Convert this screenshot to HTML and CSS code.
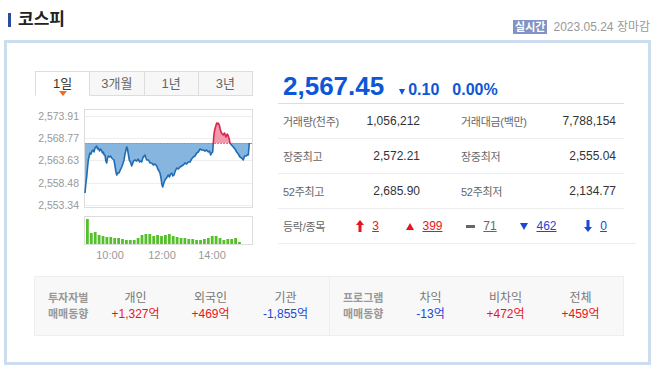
FILE: index.html
```html
<!DOCTYPE html>
<html lang="ko">
<head>
    <meta charset="UTF-8">
    <meta name="viewport" content="width=device-width, initial-scale=1.0">
    <title>코스피</title>
    <link rel="stylesheet" href="styles.css">
</head>
<body>
    <div class="head">
        <h2 class="title">코스피</h2>
        <div class="stamp">
            <span class="badge">실시간</span>
            <span class="date">2023.05.24 장마감</span>
        </div>
    </div>

    <div class="box">
        <div class="top">
            <div class="chart-col">
                <ul class="tabs">
                    <li class="on">1일</li>
                    <li>3개월</li>
                    <li>1년</li>
                    <li>3년</li>
                </ul>
                <svg class="chart" width="218" height="166" viewBox="0 0 218 166">
                    <defs>
                        <clipPath id="dn"><rect x="49" y="47" width="170" height="66"/></clipPath>
                        <clipPath id="upc"><rect x="49" y="13" width="170" height="34"/></clipPath>
                    </defs>
                    <!-- 가격 영역 -->
                    <rect x="49.5" y="13.5" width="168" height="98" fill="#fff" stroke="#ddd"/>
                    <g stroke="#eee" stroke-width="1">
                        <line x1="50" y1="20.5" x2="217" y2="20.5"/>
                        <line x1="50" y1="42.5" x2="217" y2="42.5"/>
                        <line x1="50" y1="64.5" x2="217" y2="64.5"/>
                        <line x1="50" y1="87.5" x2="217" y2="87.5"/>
                        <line x1="50" y1="109.5" x2="217" y2="109.5"/>
                    </g>
                    <g class="ylab" text-anchor="end">
                        <text x="44" y="24">2,573.91</text>
                        <text x="44" y="46">2,568.77</text>
                        <text x="44" y="68">2,563.63</text>
                        <text x="44" y="91">2,558.48</text>
                        <text x="44" y="113">2,553.34</text>
                    </g>
                    <g id="line-shape">
                        <polygon clip-path="url(#dn)" fill="#86b6df" points="50,47 50,97 50.8,88 51.7,81 52.5,72 53.3,64 54.2,60 55,57 56,58 57,55 58,54 59,56 60,52 61.7,50 62.5,53 63.3,52 64.5,55 65.5,53 66.7,55 67.5,57 68.3,56 69.2,59 70,59 70.8,65 71.7,67 72.5,62 73.4,60 74.3,61 75.5,60 76.7,62 77.8,63 79,64 80,70 80.8,75 81.7,79 82.8,77 84,77 85.3,74 86.7,71 87.8,68 89,64 90,58 91,54 91.7,51 92.3,52 93.3,58 94.3,64 95.5,66 96.7,70 97.5,68 98.5,65 100,64 101.7,65 103.3,63 104.5,66 105.6,65 106.7,66 107.8,62 109,60 110,59 110.8,62 111.7,64 113.5,64 115,67 116.7,67 118.3,69 120,68 121.7,70 122.8,73 124,75 125,77 126,82 126.8,88 127.7,91 128.8,87 130,84 131.5,82 133.3,79 134.5,81 135.6,78 136.7,77 137.8,80 139,79 140.3,75 141.7,72 143.3,73 145,71 146.6,70 148.3,69 150,67 151.6,68 153.3,66 155,66 156.6,63 158.3,61 160,60 161.7,57 163.3,56 165,53 166.6,54 168.3,54 170,55 171.5,54 173.3,56 174.5,55 175.7,59 176.7,57 177.7,56 178.3,47 178.8,40 179.3,36 180.5,31 181.7,27 182.5,28 183.3,27 184.3,29 185.2,33 186,36 187.2,38 188.3,39 189.5,37 191,41 192.2,38 193.3,40 194.2,43 195,47 196.5,49 198.3,51 200,53 201.7,56 203.3,58 205,61 206.6,62 208.3,64 209.5,60 211,60 212.3,59 213.3,59 214.3,47"/>
                        <polygon clip-path="url(#upc)" fill="#f09aab" points="50,47 50,97 50.8,88 51.7,81 52.5,72 53.3,64 54.2,60 55,57 56,58 57,55 58,54 59,56 60,52 61.7,50 62.5,53 63.3,52 64.5,55 65.5,53 66.7,55 67.5,57 68.3,56 69.2,59 70,59 70.8,65 71.7,67 72.5,62 73.4,60 74.3,61 75.5,60 76.7,62 77.8,63 79,64 80,70 80.8,75 81.7,79 82.8,77 84,77 85.3,74 86.7,71 87.8,68 89,64 90,58 91,54 91.7,51 92.3,52 93.3,58 94.3,64 95.5,66 96.7,70 97.5,68 98.5,65 100,64 101.7,65 103.3,63 104.5,66 105.6,65 106.7,66 107.8,62 109,60 110,59 110.8,62 111.7,64 113.5,64 115,67 116.7,67 118.3,69 120,68 121.7,70 122.8,73 124,75 125,77 126,82 126.8,88 127.7,91 128.8,87 130,84 131.5,82 133.3,79 134.5,81 135.6,78 136.7,77 137.8,80 139,79 140.3,75 141.7,72 143.3,73 145,71 146.6,70 148.3,69 150,67 151.6,68 153.3,66 155,66 156.6,63 158.3,61 160,60 161.7,57 163.3,56 165,53 166.6,54 168.3,54 170,55 171.5,54 173.3,56 174.5,55 175.7,59 176.7,57 177.7,56 178.3,47 178.8,40 179.3,36 180.5,31 181.7,27 182.5,28 183.3,27 184.3,29 185.2,33 186,36 187.2,38 188.3,39 189.5,37 191,41 192.2,38 193.3,40 194.2,43 195,47 196.5,49 198.3,51 200,53 201.7,56 203.3,58 205,61 206.6,62 208.3,64 209.5,60 211,60 212.3,59 213.3,59 214.3,47"/>
                    </g>
                    <line x1="50" y1="47.5" x2="217" y2="47.5" stroke="#999" stroke-dasharray="2 1"/>
                    <polyline clip-path="url(#dn)" fill="none" stroke="#1f6db3" stroke-width="1.6" stroke-linejoin="round" points="50,97 50.8,88 51.7,81 52.5,72 53.3,64 54.2,60 55,57 56,58 57,55 58,54 59,56 60,52 61.7,50 62.5,53 63.3,52 64.5,55 65.5,53 66.7,55 67.5,57 68.3,56 69.2,59 70,59 70.8,65 71.7,67 72.5,62 73.4,60 74.3,61 75.5,60 76.7,62 77.8,63 79,64 80,70 80.8,75 81.7,79 82.8,77 84,77 85.3,74 86.7,71 87.8,68 89,64 90,58 91,54 91.7,51 92.3,52 93.3,58 94.3,64 95.5,66 96.7,70 97.5,68 98.5,65 100,64 101.7,65 103.3,63 104.5,66 105.6,65 106.7,66 107.8,62 109,60 110,59 110.8,62 111.7,64 113.5,64 115,67 116.7,67 118.3,69 120,68 121.7,70 122.8,73 124,75 125,77 126,82 126.8,88 127.7,91 128.8,87 130,84 131.5,82 133.3,79 134.5,81 135.6,78 136.7,77 137.8,80 139,79 140.3,75 141.7,72 143.3,73 145,71 146.6,70 148.3,69 150,67 151.6,68 153.3,66 155,66 156.6,63 158.3,61 160,60 161.7,57 163.3,56 165,53 166.6,54 168.3,54 170,55 171.5,54 173.3,56 174.5,55 175.7,59 176.7,57 177.7,56 178.3,47 178.8,40 179.3,36 180.5,31 181.7,27 182.5,28 183.3,27 184.3,29 185.2,33 186,36 187.2,38 188.3,39 189.5,37 191,41 192.2,38 193.3,40 194.2,43 195,47 196.5,49 198.3,51 200,53 201.7,56 203.3,58 205,61 206.6,62 208.3,64 209.5,60 211,60 212.3,59 213.3,59 214.3,47"/>
                    <polyline clip-path="url(#upc)" fill="none" stroke="#d8274e" stroke-width="1.6" stroke-linejoin="round" points="177.7,56 178.3,47 178.8,40 179.3,36 180.5,31 181.7,27 182.5,28 183.3,27 184.3,29 185.2,33 186,36 187.2,38 188.3,39 189.5,37 191,41 192.2,38 193.3,40 194.2,43 195,47 196.5,49"/>

                    <!-- 거래량 -->
                    <rect x="49.5" y="120.5" width="168" height="28" fill="#fff" stroke="#ddd"/>
                    <g fill="#54c02a">
                        <rect x="51" y="123" width="2.8" height="25"/>
                        <rect x="54.9" y="137" width="2.8" height="11"/>
                        <rect x="58.8" y="136" width="2.8" height="12"/>
                        <rect x="62.7" y="139" width="2.8" height="9"/>
                        <rect x="66.6" y="140" width="2.8" height="8"/>
                        <rect x="70.5" y="141" width="2.8" height="7"/>
                        <rect x="74.4" y="141" width="2.8" height="7"/>
                        <rect x="78.3" y="142" width="2.8" height="6"/>
                        <rect x="82.2" y="142" width="2.8" height="6"/>
                        <rect x="86.1" y="143" width="2.8" height="5"/>
                        <rect x="90" y="144" width="2.8" height="4"/>
                        <rect x="93.9" y="144" width="2.8" height="4"/>
                        <rect x="97.8" y="144" width="2.8" height="4"/>
                        <rect x="101.7" y="142" width="2.8" height="6"/>
                        <rect x="105.6" y="139" width="2.8" height="9"/>
                        <rect x="109.5" y="138" width="2.8" height="10"/>
                        <rect x="113.4" y="138" width="2.8" height="10"/>
                        <rect x="117.3" y="140" width="2.8" height="8"/>
                        <rect x="121.2" y="139" width="2.8" height="9"/>
                        <rect x="125.1" y="140" width="2.8" height="8"/>
                        <rect x="129" y="139" width="2.8" height="9"/>
                        <rect x="132.9" y="138" width="2.8" height="10"/>
                        <rect x="136.8" y="140" width="2.8" height="8"/>
                        <rect x="140.7" y="141" width="2.8" height="7"/>
                        <rect x="144.6" y="142" width="2.8" height="6"/>
                        <rect x="148.5" y="142" width="2.8" height="6"/>
                        <rect x="152.4" y="143" width="2.8" height="5"/>
                        <rect x="156.3" y="143" width="2.8" height="5"/>
                        <rect x="160.2" y="144" width="2.8" height="4"/>
                        <rect x="164.1" y="144" width="2.8" height="4"/>
                        <rect x="168" y="143" width="2.8" height="5"/>
                        <rect x="171.9" y="142" width="2.8" height="6"/>
                        <rect x="175.8" y="140" width="2.8" height="8"/>
                        <rect x="179.7" y="140" width="2.8" height="8"/>
                        <rect x="183.6" y="142" width="2.8" height="6"/>
                        <rect x="187.5" y="144" width="2.8" height="4"/>
                        <rect x="191.4" y="143" width="2.8" height="5"/>
                        <rect x="195.3" y="143" width="2.8" height="5"/>
                        <rect x="199.2" y="142" width="2.8" height="6"/>
                        <rect x="203.1" y="146" width="2.8" height="2"/>
                    </g>
                    <g class="xlab" text-anchor="middle">
                        <text x="75" y="163">10:00</text>
                        <text x="127" y="163">12:00</text>
                        <text x="177" y="163">14:00</text>
                    </g>
                </svg>
            </div>

            <div class="info">
                <div class="price-row">
                    <strong class="price">2,567.45</strong>
                    <span class="chg"><svg class="tri" width="6" height="6" viewBox="0 0 6 6"><polygon points="0,0 6,0 3,6" fill="currentColor"/></svg>0.10</span>
                    <span class="rate">0.00%</span>
                </div>
                <div class="row">
                    <span class="lbl">거래량(천주)</span>
                    <span class="val">1,056,212</span>
                    <span class="lbl lbl2">거래대금(백만)</span>
                    <span class="val">7,788,154</span>
                </div>
                <div class="row">
                    <span class="lbl">장중최고</span>
                    <span class="val">2,572.21</span>
                    <span class="lbl lbl2">장중최저</span>
                    <span class="val">2,555.04</span>
                </div>
                <div class="row">
                    <span class="lbl">52주최고</span>
                    <span class="val">2,685.90</span>
                    <span class="lbl lbl2">52주최저</span>
                    <span class="val">2,134.77</span>
                </div>
                <div class="row updown">
                    <span class="lbl">등락/종목</span>
                    <a class="cnt red"><svg width="8" height="12" viewBox="0 0 8 12"><polygon points="4,0 8,5 5.5,5 5.5,12 2.5,12 2.5,5 0,5" fill="currentColor"/></svg><u>3</u></a>
                    <a class="cnt red"><svg width="8" height="7" viewBox="0 0 8 7"><polygon points="4,0 8,7 0,7" fill="currentColor"/></svg><u>399</u></a>
                    <a class="cnt gray"><svg width="9" height="3" viewBox="0 0 9 3"><rect width="9" height="3" fill="currentColor"/></svg><u>71</u></a>
                    <a class="cnt blue"><svg width="8" height="7" viewBox="0 0 8 7"><polygon points="0,0 8,0 4,7" fill="currentColor"/></svg><u>462</u></a>
                    <a class="cnt blue"><svg width="8" height="12" viewBox="0 0 8 12"><polygon points="2.5,0 5.5,0 5.5,7 8,7 4,12 0,7 2.5,7" fill="currentColor"/></svg><u>0</u></a>
                </div>
            </div>
        </div>

        <div class="trend">
            <div class="half">
                <div class="th">투자자별<br>매매동향</div>
                <div class="cell"><span class="k">개인</span><span class="v red">+1,327억</span></div>
                <div class="cell"><span class="k">외국인</span><span class="v red">+469억</span></div>
                <div class="cell"><span class="k">기관</span><span class="v blue">-1,855억</span></div>
            </div>
            <div class="half second">
                <div class="th">프로그램<br>매매동향</div>
                <div class="cell"><span class="k">차익</span><span class="v blue">-13억</span></div>
                <div class="cell"><span class="k">비차익</span><span class="v red">+472억</span></div>
                <div class="cell"><span class="k">전체</span><span class="v red">+459억</span></div>
            </div>
        </div>
    </div>
</body>
</html>
```

FILE: styles.css
```css
body {
    margin: 0;
    width: 658px;
    font-family: "Liberation Sans", "Noto Sans CJK KR", sans-serif;
    color: #333;
}
.head {
    display: flex;
    justify-content: space-between;
    height: 40px;
    padding: 0 8px;
    box-sizing: border-box;
}
.title {
    display: flex;
    align-items: center;
    margin: 11px 0 0;
    height: 18px;
    font-size: 17px;
    line-height: 18px;
    font-weight: bold;
    color: #222;
}
.title::before {
    content: "";
    width: 3px;
    height: 14px;
    margin-right: 7px;
    background-color: #2b4c9b;
}
.stamp {
    align-self: flex-end;
    display: flex;
    align-items: center;
    gap: 6px;
    margin-bottom: 6px;
}
.badge {
    padding: 0 2px;
    background-color: #8194c4;
    color: #fff;
    font-size: 11px;
    line-height: 14px;
    font-weight: bold;
}
.date {
    font-size: 12px;
    line-height: 14px;
    color: #999;
}
.box {
    margin-left: 4px;
    width: 647px;
    height: 325px;
    box-sizing: border-box;
    border: 3px solid #cddcef;
    padding: 28px 0 0 27px;
}
.top {
    display: flex;
    gap: 25px;
}
.chart-col {
    width: 218px;
    margin-left: 1px;
}
.tabs {
    display: flex;
    list-style: none;
    margin: 0;
    padding: 0;
    height: 25px;
}
.tabs li {
    position: relative;
    flex: 1;
    text-align: center;
    font-size: 13px;
    line-height: 23px;
    border: 1px solid #ddd;
    border-left: none;
    background-color: #f7f7f7;
    color: #666;
}
.tabs li:first-child {
    border-left: 1px solid #ddd;
}
.tabs li.on {
    background-color: #fff;
    border-bottom-color: #fff;
    color: #333;
}
.tabs li.on::after {
    content: "";
    position: absolute;
    left: 50%;
    bottom: -1px;
    margin-left: -4px;
    border: 4px solid transparent;
    border-top: 5px solid #f26b1d;
    border-bottom: none;
}
.chart {
    display: block;
}
.ylab text, .xlab text {
    font-size: 10.5px;
    fill: #999;
}
.xlab text {
    font-size: 11px;
}
.info {
    width: 346px;
}
.price-row {
    display: flex;
    align-items: baseline;
    height: 33px;
    padding-left: 5px;
    box-sizing: border-box;
    border-bottom: 1px solid #ddd;
    line-height: 30px;
    color: #0d56d8;
}
.price {
    font-size: 26px;
}
.chg, .rate {
    font-size: 16px;
    font-weight: bold;
}
.chg {
    margin-left: 15px;
}
.tri {
    margin-right: 3px;
}
.rate {
    margin-left: 13px;
}
.row {
    display: grid;
    grid-template-columns: 70px 67px 116px 1fr;
    align-items: center;
    height: 35px;
    padding: 0 8px 0 5px;
    box-sizing: border-box;
    border-bottom: 1px solid #eee;
    font-size: 12px;
}
.lbl {
    font-size: 11px;
    color: #666;
    letter-spacing: -0.3px;
}
.lbl2 {
    padding-left: 41px;
}
.val {
    text-align: right;
    color: #333;
}
.row.updown {
    grid-template-columns: 56px repeat(5, 57px);
    margin-right: -12px;
    padding-right: 0;
}
.cnt {
    display: flex;
    justify-content: center;
    align-items: center;
    gap: 8px;
}
.red {
    color: #e8151c;
}
.blue {
    color: #1a48d6;
}
.gray {
    color: #666;
}
.trend {
    display: flex;
    margin-top: 14px;
    width: 590px;
    height: 60px;
    box-sizing: border-box;
    border: 1px solid #eee;
    background-color: #f8f8f8;
}
.half {
    display: grid;
    grid-template-columns: 50px repeat(3, 75px);
    align-items: center;
    width: 294px;
    padding-left: 13px;
    box-sizing: border-box;
}
.half.second {
    border-left: 1px solid #eee;
}
.th {
    font-size: 11px;
    line-height: 16px;
    font-weight: bold;
    color: #999;
}
.cell {
    display: flex;
    flex-direction: column;
    align-items: center;
    font-size: 12px;
    line-height: 16px;
}
.k {
    color: #777;
}
```
